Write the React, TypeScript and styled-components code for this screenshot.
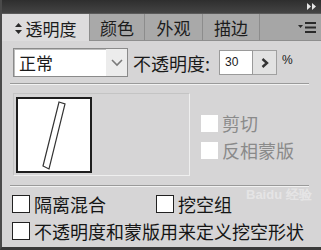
import React from "react"
import styled, { createGlobalStyle } from "styled-components"

const GlobalStyle = createGlobalStyle`
  body {
    margin: 0;
    background: #d6d5d6;
    font-family: "Noto Sans CJK SC", "Liberation Sans", sans-serif;
  }
`

const Panel = styled.div`
  position: relative;
  width: 321px;
  height: 250px;
  box-sizing: border-box;
  background: #d6d5d6;
  border-left: 2px solid #4a4a4a;
  border-bottom: 3px solid #3a3a3a;
  display: flex;
  flex-direction: column;
  overflow: hidden;
  color: #1a1a1a;
`

const TopBar = styled.div`
  height: 13px;
  flex: none;
  background: linear-gradient(#2e2e2e, #444);
  display: flex;
  justify-content: flex-end;
  align-items: center;
  padding-right: 4px;
`

const TabRow = styled.div`
  height: 28px;
  flex: none;
  display: flex;
  background: #a6a6a6;
  border-top: 1px solid #5a5a5a;
  box-sizing: border-box;
`

const Tab = styled.div<{ $active?: boolean; $w: number }>`
  width: ${({ $w }) => $w}px;
  flex: none;
  box-sizing: border-box;
  display: flex;
  align-items: center;
  justify-content: center;
  gap: 4px;
  font-size: 17px;
  line-height: 1;
  background: ${({ $active }) => ($active ? "#dddcdd" : "#a9a9a9")};
  border-right: 1px solid #8c8c8c;
  border-bottom: ${({ $active }) => ($active ? "none" : "1px solid #8e8e8e")};
  color: #1c1c1c;
  padding-top: ${({ $active }) => ($active ? "1px" : "0")};
`

const TabFill = styled.div`
  flex: 1;
  display: flex;
  align-items: center;
  justify-content: flex-end;
  padding-right: 5px;
  border-bottom: 1px solid #8e8e8e;
`

const Body = styled.div`
  flex: 1;
  display: flex;
  flex-direction: column;
  padding: 7px 12px 0 6px;
`

const Row = styled.div`
  display: flex;
  align-items: center;
  height: 29px;
  padding-left: 5px;
`

const Select = styled.div`
  width: 115px;
  height: 29px;
  box-sizing: border-box;
  display: flex;
  border: 1px solid #8a8a8a;
  background: #fff;
  box-shadow: inset 1px 1px 0 #bdbdbd;
`

const SelectText = styled.div`
  flex: 1;
  font-size: 17px;
  line-height: 27px;
  padding-left: 5px;
`

const SelectArrow = styled.div`
  width: 21px;
  background: #ececec;
  display: flex;
  align-items: center;
  justify-content: center;
`

const Label = styled.span`
  font-size: 18px;
  line-height: 1;
  margin-left: 5px;
  white-space: nowrap;
`

const NumInput = styled.div`
  margin-left: 9px;
  width: 34px;
  height: 25px;
  box-sizing: border-box;
  background: #fff;
  border: 1px solid #9a9a9a;
  font-family: "Liberation Sans", sans-serif;
  font-size: 12px;
  line-height: 23px;
  padding-left: 5px;
`

const StepBtn = styled.div`
  width: 24px;
  height: 25px;
  box-sizing: border-box;
  background: #e2e2e2;
  border: 1px solid #a0a0a0;
  border-left: none;
  display: flex;
  align-items: center;
  justify-content: center;
`

const Percent = styled.span`
  margin-left: 5px;
  font-family: "Liberation Sans", sans-serif;
  font-size: 12px;
  margin-top: -6px;
`

const Separator = styled.div<{ $mt: number }>`
  margin-top: ${({ $mt }) => $mt}px;
  height: 1px;
  background: #9a9a9a;
  border-bottom: 1px solid #f2f2f2;
  margin-left: 2px;
`

const MaskArea = styled.div`
  margin-top: 8px;
  display: flex;
  align-items: flex-start;
`

const MaskFrame = styled.div`
  margin-left: 5px;
  width: 177px;
  height: 83px;
  box-sizing: border-box;
  border: 1px solid #efefef;
  border-top-color: #c4c4c4;
  border-left-color: #c4c4c4;
  padding: 3px 2px;
`

const Thumb = styled.div`
  width: 76px;
  height: 76px;
  box-sizing: border-box;
  border: 2px solid #1e1e1e;
  background: #fff;
`

const SideChecks = styled.div`
  margin-left: 11px;
  margin-top: 21px;
  display: flex;
  flex-direction: column;
  gap: 9px;
`

const CheckRow = styled.label<{ $disabled?: boolean }>`
  display: flex;
  align-items: center;
  gap: 4px;
  font-size: 18px;
  line-height: 1;
  color: ${({ $disabled }) => ($disabled ? "#8a8a8a" : "#151515")};
  white-space: nowrap;
`

const Box = styled.span<{ $disabled?: boolean; $size: number }>`
  width: ${({ $size }) => $size}px;
  height: ${({ $size }) => $size}px;
  box-sizing: border-box;
  background: #fff;
  border: ${({ $disabled }) => ($disabled ? "none" : "1px solid #222")};
  flex: none;
`

const BottomChecks = styled.div`
  margin-top: 8px;
  padding-left: 4px;
  display: flex;
  flex-direction: column;
  gap: 9px;
`

const CheckLine = styled.div`
  display: flex;
  gap: 50px;
`

const Watermark = styled.div`
  position: absolute;
  left: 244px;
  top: 186px;
  font-family: "Liberation Sans", sans-serif;
  font-size: 13px;
  font-weight: bold;
  color: rgba(255, 255, 255, 0.4);
  pointer-events: none;
`

const FastForward = () => (
  <svg width="10" height="7" viewBox="0 0 10 7">
    <path d="M0 0 L4 3.5 L0 7 Z M5 0 L9 3.5 L5 7 Z" fill="#e6e6e6" />
  </svg>
)

const UpDown = () => (
  <svg width="7" height="11" viewBox="0 0 7 11">
    <path d="M3.5 0 L7 4 L0 4 Z M0 7 L7 7 L3.5 11 Z" fill="#2a2a2a" />
  </svg>
)

const MenuIcon = () => (
  <svg width="18" height="11" viewBox="0 0 18 11">
    <path d="M0 3 L5 3 L2.5 6 Z" fill="#2a2a2a" />
    <rect x="7" y="0" width="11" height="2" fill="#2a2a2a" />
    <rect x="7" y="4.5" width="11" height="2" fill="#2a2a2a" />
    <rect x="7" y="9" width="11" height="2" fill="#2a2a2a" />
  </svg>
)

const Chevron = () => (
  <svg width="12" height="8" viewBox="0 0 12 8">
    <path d="M1 1 L6 6 L11 1" fill="none" stroke="#7a7a7a" strokeWidth="1.6" />
  </svg>
)

const RightArrow = () => (
  <svg width="8" height="10" viewBox="0 0 8 10">
    <path d="M1.5 1 L6 5 L1.5 9" fill="none" stroke="#333" strokeWidth="2.4" />
  </svg>
)

const SlashShape = () => (
  <svg width="72" height="72" viewBox="0 0 72 72">
    <polygon
      points="41,3 47,5 31,70 25,67"
      fill="#fff"
      stroke="#333"
      strokeWidth="1.2"
    />
  </svg>
)

const App: React.FC = () => {
  return (
    <>
      <GlobalStyle />
      <Panel>
        <TopBar>
          <FastForward />
        </TopBar>
        <TabRow>
          <Tab $active $w={88}>
            <UpDown />
            透明度
          </Tab>
          <Tab $w={55}>颜色</Tab>
          <Tab $w={58}>外观</Tab>
          <Tab $w={57}>描边</Tab>
          <TabFill>
            <MenuIcon />
          </TabFill>
        </TabRow>
        <Body>
          <Row>
            <Select>
              <SelectText>正常</SelectText>
              <SelectArrow>
                <Chevron />
              </SelectArrow>
            </Select>
            <Label>不透明度:</Label>
            <NumInput>30</NumInput>
            <StepBtn>
              <RightArrow />
            </StepBtn>
            <Percent>%</Percent>
          </Row>
          <Separator $mt={6} />
          <MaskArea>
            <MaskFrame>
              <Thumb>
                <SlashShape />
              </Thumb>
            </MaskFrame>
            <SideChecks>
              <CheckRow $disabled>
                <Box $disabled $size={17} />
                剪切
              </CheckRow>
              <CheckRow $disabled>
                <Box $disabled $size={17} />
                反相蒙版
              </CheckRow>
            </SideChecks>
          </MaskArea>
          <Separator $mt={9} />
          <BottomChecks>
            <CheckLine>
              <CheckRow>
                <Box $size={18} />
                隔离混合
              </CheckRow>
              <CheckRow>
                <Box $size={18} />
                挖空组
              </CheckRow>
            </CheckLine>
            <CheckRow>
              <Box $size={18} />
              不透明度和蒙版用来定义挖空形状
            </CheckRow>
          </BottomChecks>
        </Body>
        <Watermark>Baidu 经验</Watermark>
      </Panel>
    </>
  )
}

export default App
